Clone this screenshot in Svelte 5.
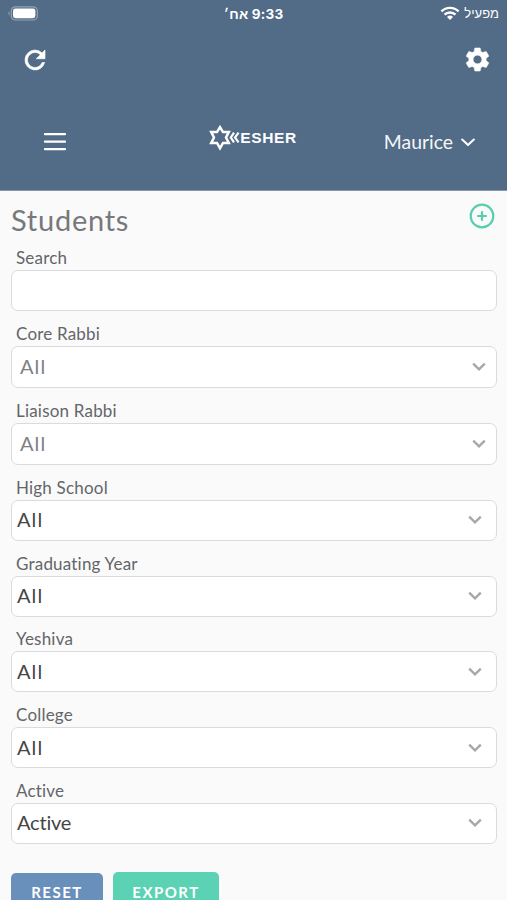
<script lang="ts">
  interface Field {
    label: string;
    value: string;
    kind: 'input' | 'picker' | 'select';
  }

  const fields: Field[] = [
    { label: 'Search', value: '', kind: 'input' },
    { label: 'Core Rabbi', value: 'All', kind: 'picker' },
    { label: 'Liaison Rabbi', value: 'All', kind: 'picker' },
    { label: 'High School', value: 'All', kind: 'select' },
    { label: 'Graduating Year', value: 'All', kind: 'select' },
    { label: 'Yeshiva', value: 'All', kind: 'select' },
    { label: 'College', value: 'All', kind: 'select' },
    { label: 'Active', value: 'Active', kind: 'select' }
  ];
</script>

<div class="screen">
  <header>
    <div class="status-bar">
      <svg class="battery" width="31" height="15" viewBox="0 0 31 15">
        <path d="M1.4 5.2v4.2C.3 9 .3 5.7 1.4 5.2z" fill="#a9b7c6" />
        <rect x="3.3" y=".8" width="26" height="13.2" rx="4" fill="none" stroke="#93a4b6" stroke-width="1.2" />
        <rect x="5" y="2.6" width="22.4" height="9.6" rx="2.4" fill="#fff" />
      </svg>
      <div class="time" dir="rtl">9:33 אח׳</div>
      <div class="carrier">
        <svg width="20" height="15" viewBox="0 0 20 15" fill="none" stroke="#fff" stroke-width="2.4">
          <path d="M1.4 5.4a12.2 12.2 0 0 1 17.2 0" />
          <path d="M4.5 8.7a7.8 7.8 0 0 1 11 0" />
          <path d="M7 11a4.3 4.3 0 0 1 6 0l-3 3z" fill="#fff" stroke="none" />
        </svg>
        <span dir="rtl">מפעיל</span>
      </div>
    </div>

    <div class="tool-bar">
      <button aria-label="Refresh">
        <svg width="30" height="30" viewBox="0 0 24 24" fill="#fff">
          <path d="M17.65 6.35A7.95 7.95 0 0 0 12 4a8 8 0 1 0 7.73 10h-2.08A6 6 0 1 1 12 6c1.66 0 3.14.69 4.22 1.78L13 11h7V4z" stroke="#fff" stroke-width=".5" />
        </svg>
      </button>
      <button aria-label="Settings">
        <svg width="29" height="29" viewBox="0 0 24 24" fill="#fff">
          <path d="M19.14 12.94c.04-.3.06-.61.06-.94s-.02-.64-.07-.94l2.03-1.58a.49.49 0 0 0 .12-.61l-1.92-3.32a.488.488 0 0 0-.59-.22l-2.39.96c-.5-.38-1.03-.7-1.62-.94l-.36-2.54a.484.484 0 0 0-.48-.41h-3.84c-.24 0-.43.17-.47.41l-.36 2.54c-.59.24-1.13.57-1.62.94l-2.39-.96c-.22-.08-.47 0-.59.22L2.74 8.87c-.12.21-.08.47.12.61l2.03 1.58c-.05.3-.09.63-.09.94s.02.64.07.94l-2.03 1.58a.49.49 0 0 0-.12.61l1.92 3.32c.12.22.37.29.59.22l2.39-.96c.5.38 1.03.7 1.62.94l.36 2.54c.05.24.24.41.48.41h3.84c.24 0 .44-.17.47-.41l.36-2.54c.59-.24 1.13-.56 1.62-.94l2.39.96c.22.08.47 0 .59-.22l1.92-3.32c.12-.22.07-.47-.12-.61zM12 15.6a3.6 3.6 0 1 1 0-7.2 3.6 3.6 0 0 1 0 7.2z" stroke="#fff" stroke-width=".4" />
        </svg>
      </button>
    </div>

    <nav>
      <button aria-label="Menu">
        <svg width="24" height="20" viewBox="0 0 24 20" stroke="#fff" stroke-width="2.3" stroke-linecap="round">
          <path d="M2 2.2h20M2 9.7h20M2 17.2h20" />
        </svg>
      </button>
      <div class="logo">
        <svg width="31" height="26" viewBox="0 0 31 26" fill="none" stroke="#fff">
          <path d="M11 2.2l3 4.9h5.8L17 12.5l2.8 5.5H14l-3 5.3L8 18H2.2L5 12.5 2.2 7.1H8z" stroke-width="2.5" />
          <path d="M25 7.7l-3.2 4.8 3.2 4.8M29.600 7.700L26 12.500l3.600 4.800" stroke-width="2.2" />
        </svg>
        <span>ESHER</span>
      </div>
      <button class="user">
        <span>Maurice</span>
        <svg width="14" height="9" viewBox="0 0 14 9" fill="none" stroke="#fff" stroke-width="2" stroke-linecap="round" stroke-linejoin="round">
          <path d="M1.2 1.5L7 7l5.800-5.500" />
        </svg>
      </button>
    </nav>
  </header>

  <main>
    <div class="title-row">
      <h1>Students</h1>
      <button aria-label="Add student">
        <svg width="26" height="26" viewBox="0 0 26 26" fill="none" stroke="#57cfae" stroke-linecap="round">
          <circle cx="13" cy="13" r="11.3" stroke-width="2.2" />
          <path d="M13 9v8M9 13h8" stroke-width="2.2" />
        </svg>
      </button>
    </div>

    {#each fields as field}
      <div class="field">
        <div class="label">{field.label}</div>
        <div class="control {field.kind}">
          <span class:all={field.value === 'All'}>{field.value}</span>
          {#if field.kind !== 'input'}
            <svg width="14" height="10" viewBox="0 0 14 10" fill="none" stroke="#a8a8a8" stroke-width="2.4">
              <path d="M1.2 1.6L7 7.3l5.8-5.7" />
            </svg>
          {/if}
        </div>
      </div>
    {/each}

    <div class="actions">
      <button class="reset">RESET</button>
      <button class="export">EXPORT</button>
    </div>
  </main>
</div>

<style>
  .screen {
    height: 900px;
    overflow: hidden;
    background: #fafafa;
    font-family: Lato, "Noto Sans", sans-serif;
    font-variant-ligatures: none;
  }

  button {
    display: flex;
    align-items: center;
    padding: 0;
    border: none;
    background: none;
    font: inherit;
  }

  header {
    height: 191px;
    background: #526b86;
    border-bottom: 1px solid #8798aa;
    box-sizing: border-box;
    color: #fff;
  }

  .status-bar {
    display: grid;
    grid-template-columns: 1fr auto 1fr;
    align-items: center;
    height: 27px;
    padding: 0 8px;
  }

  .time {
    font: bold 13.5px/20px Inter, "Liberation Sans", sans-serif;
    letter-spacing: 0.2px;
  }

  .carrier {
    display: flex;
    align-items: center;
    justify-content: flex-end;
    gap: 4px;
    font: 13px/20px "Liberation Sans", sans-serif;
  }

  .tool-bar {
    display: flex;
    align-items: center;
    justify-content: space-between;
    height: 65px;
    padding: 0 15px 0 20px;
  }

  nav {
    display: grid;
    grid-template-columns: 1fr auto 1fr;
    align-items: center;
    height: 99px;
    padding: 0 32px 0 43px;
  }

  .logo {
    display: flex;
    align-items: center;
    margin: 0 12px 8px 0;
  }

  .logo span {
    font: bold 15.5px/20px "Liberation Sans", sans-serif;
    letter-spacing: 0.6px;
  }

  .user {
    justify-self: end;
    gap: 8px;
    color: #f4f6f8;
    font-size: 19.4px;
  }

  .user svg {
    margin-top: 2px;
  }

  main {
    padding: 0 10px 0 11px;
  }

  .title-row {
    display: flex;
    justify-content: space-between;
    height: 55px;
  }

  .title-row button {
    align-self: flex-start;
    margin: 12px 2px 0 0;
  }

  h1 {
    margin: 10px 0 0;
    color: #77787b;
    font-size: 29px;
    font-weight: 400;
    line-height: 38px;
    letter-spacing: 0.75px;
  }

  .field {
    margin-bottom: 10.75px;
  }

  .label {
    height: 24px;
    padding-left: 5px;
    color: #646569;
    font-size: 17px;
    line-height: 24px;
    letter-spacing: 0.2px;
  }

  .control {
    display: flex;
    align-items: center;
    justify-content: space-between;
    height: 41px;
    box-sizing: border-box;
    padding: 0 14px 0 5px;
    border: 1px solid #d9dcde;
    border-radius: 7px;
    background: #fff;
    color: #444548;
    font-size: 20px;
  }

  .control span {
    padding-bottom: 2px;
    letter-spacing: -0.2px;
  }

  .control .all {
    letter-spacing: 1.1px;
  }

  .control.picker {
    height: 42.25px;
    padding: 0 10px 0 8px;
    color: #808184;
  }

  .actions {
    display: flex;
    align-items: flex-start;
    gap: 10px;
    margin-top: 28px;
  }

  .actions button {
    justify-content: center;
    height: 41px;
    border-radius: 5px;
    color: #fff;
    font-size: 15px;
    font-weight: 700;
    letter-spacing: 1.5px;
  }

  .actions .reset {
    width: 92px;
    height: 39px;
    margin-top: 1px;
    background: #698fbb;
  }

  .actions .export {
    width: 106px;
    background: #5bd2b4;
  }
</style>
